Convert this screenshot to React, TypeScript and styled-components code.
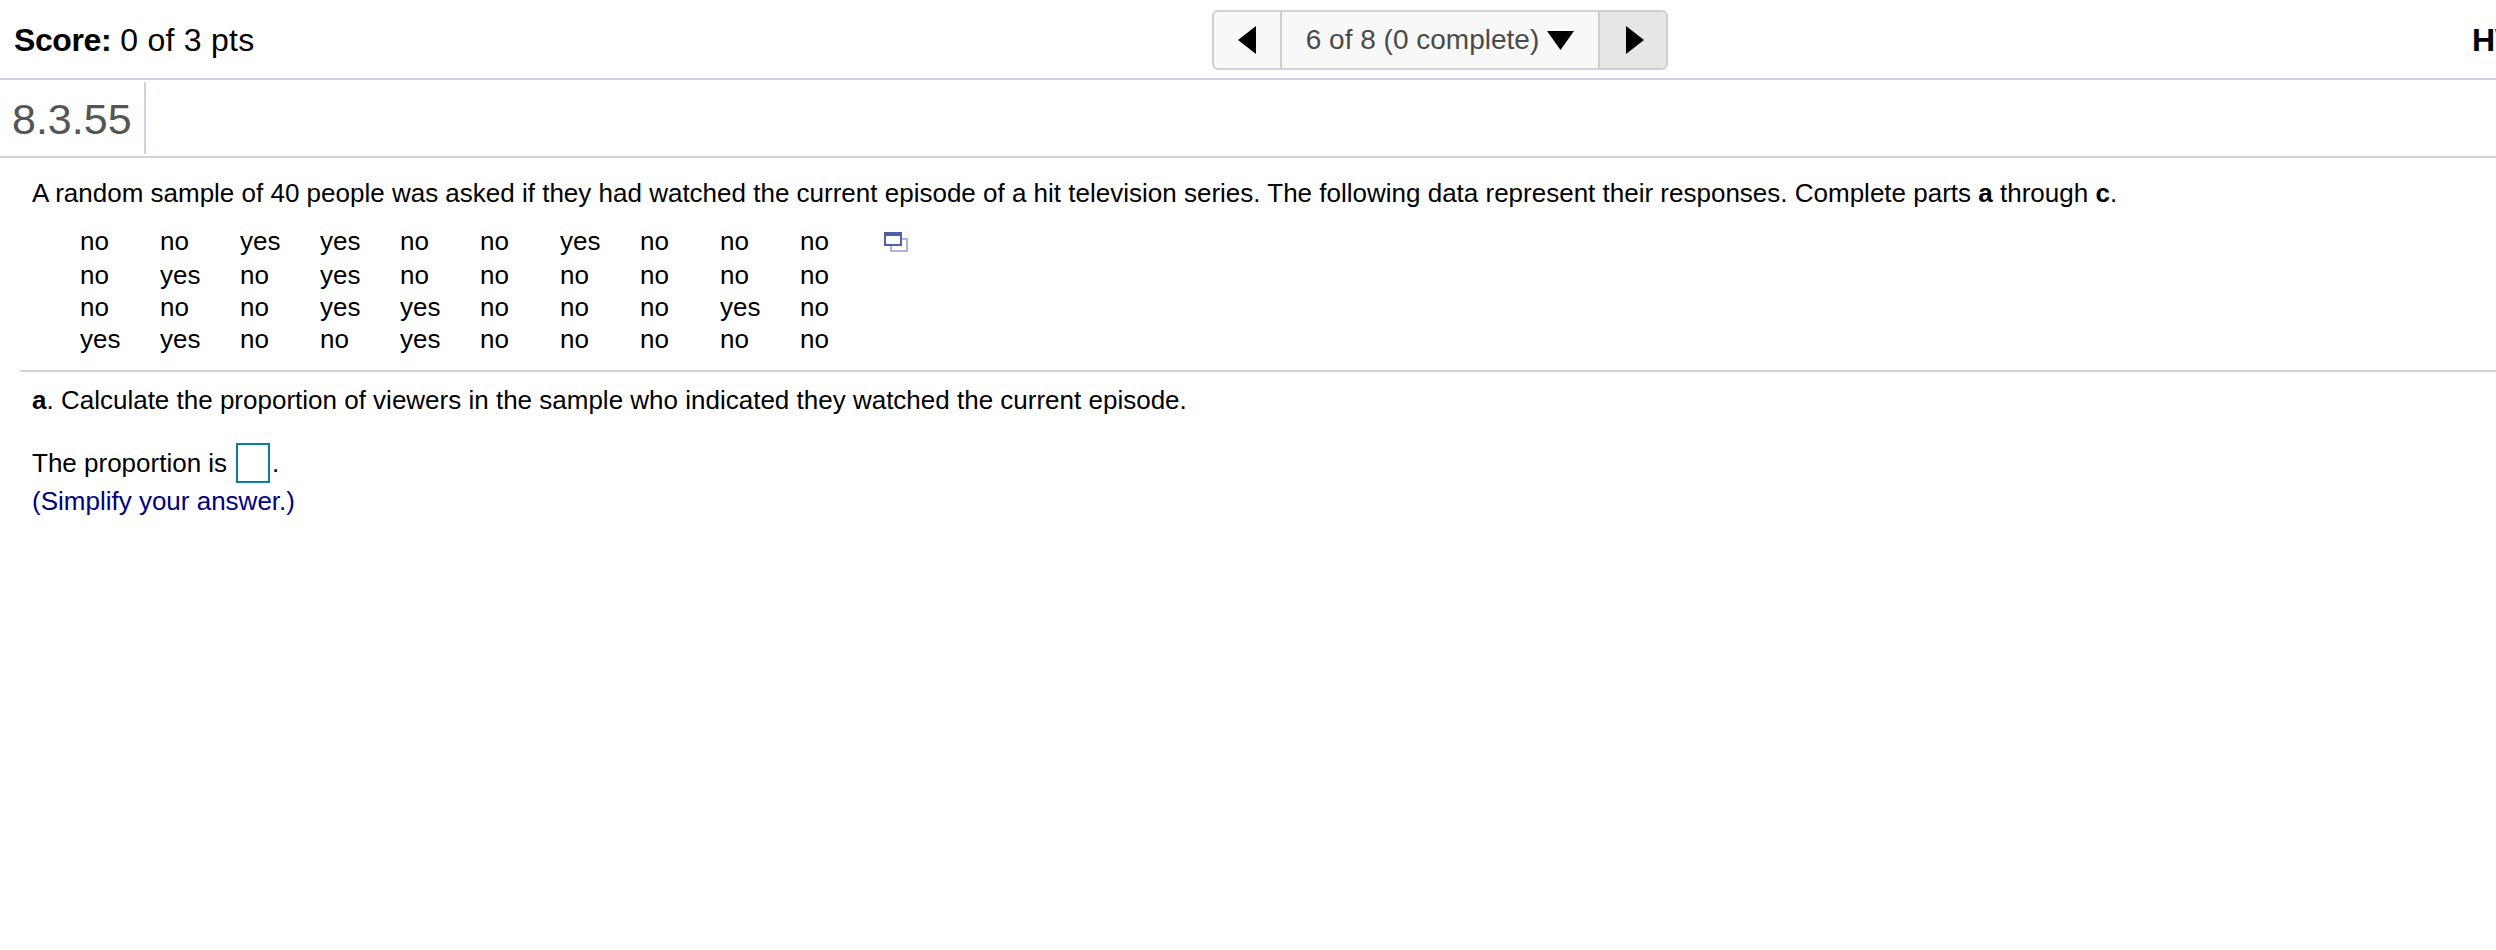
import React, { FunctionComponent } from "react"
import styled, { createGlobalStyle } from "styled-components"

const ruleColor = "#cdd1e0"

const GlobalStyle = createGlobalStyle`
  html, body {
    margin: 0;
    padding: 0;
    background: #fff;
    color: #000;
    font-family: "Liberation Sans", Arial, sans-serif;
    overflow: hidden;
  }
`

const Page = styled.div`
  width: 2496px;
  height: 950px;
  overflow: hidden;
`

const TopBar = styled.header`
  display: flex;
  align-items: flex-start;
  height: 78px;
  border-bottom: 2px solid ${ruleColor};
  overflow: hidden;
`

const Score = styled.div`
  flex: 0 0 1212px;
  padding: 22px 0 0 14px;
  box-sizing: border-box;
  font-size: 32px;
  letter-spacing: 0.25px;
  line-height: 36px;
`

const ScoreLabel = styled.b`
  letter-spacing: -0.4px;
`

const Pager = styled.nav`
  flex: 0 0 456px;
  display: flex;
  box-sizing: border-box;
  height: 60px;
  margin-top: 10px;
  border: 2px solid #d0d0d0;
  border-radius: 6px;
  background: #f8f8f8;
  overflow: hidden;
`

const PagerButton = styled.div<{ $active?: boolean }>`
  flex: 0 0 66px;
  display: flex;
  align-items: center;
  justify-content: center;
  padding-left: ${({ $active }) => ($active ? "3px" : "0")};
  box-sizing: border-box;
  background: ${({ $active }) => ($active ? "#e6e6e6" : "transparent")};
`

const PagerLabel = styled.div`
  flex: 1;
  display: flex;
  align-items: center;
  justify-content: center;
  gap: 8px;
  border-left: 2px solid #d0d0d0;
  border-right: 2px solid #d0d0d0;
  color: #4a4a4a;
  font-size: 28px;
`

const HomeworkScore = styled.div`
  margin-left: 804px;
  padding-top: 22px;
  font-size: 32px;
  font-weight: bold;
  line-height: 36px;
  white-space: nowrap;
`

const TitleRow = styled.div`
  display: flex;
  height: 76px;
  border-bottom: 2px solid ${ruleColor};
`

const QuestionNumber = styled.div`
  width: 132px;
  height: 72px;
  margin-top: 2px;
  padding-left: 12px;
  border-right: 2px solid ${ruleColor};
  color: #555;
  font-size: 43px;
  line-height: 74px;
`

const Body = styled.main`
  padding-left: 20px;
  font-size: 26px;
`

const Intro = styled.p`
  margin: 0;
  padding: 20px 0 0 12px;
  line-height: 30px;
  white-space: nowrap;
`

const DataBlock = styled.div`
  display: flex;
  margin: 15px 0 0 60px;
`

const DataTable = styled.table`
  border-collapse: collapse;
  table-layout: fixed;
  width: 800px;
`

const DataRow = styled.tr<{ $first?: boolean }>`
  height: ${({ $first }) => ($first ? "36px" : "32px")};
`

const DataCell = styled.td`
  width: 80px;
  padding: 0;
  line-height: 30px;
`

const PopoutIcon = styled.svg`
  flex: none;
  margin: 9px 0 0 4px;
`

const Rule = styled.hr`
  height: 2px;
  margin: 15px 0 0;
  border: 0;
  background: ${ruleColor};
`

const PartPrompt = styled.p`
  margin: 0;
  padding: 13px 0 0 12px;
  line-height: 30px;
  white-space: nowrap;
`

const AnswerLine = styled.div`
  display: flex;
  align-items: center;
  margin-top: 28px;
  padding-left: 12px;
  line-height: 30px;
`

const AnswerBox = styled.span`
  box-sizing: border-box;
  width: 34px;
  height: 40px;
  margin: 0 2px 0 9px;
  border: 2px solid #0e7c9c;
`

const Hint = styled.div`
  padding-left: 12px;
  color: #000080;
  line-height: 36px;
`

const rows: string[][] = [
  ["no", "no", "yes", "yes", "no", "no", "yes", "no", "no", "no"],
  ["no", "yes", "no", "yes", "no", "no", "no", "no", "no", "no"],
  ["no", "no", "no", "yes", "yes", "no", "no", "no", "yes", "no"],
  ["yes", "yes", "no", "no", "yes", "no", "no", "no", "no", "no"],
]

const Triangle: FunctionComponent<{ points: string; width: number; height: number }> = ({
  points,
  width,
  height,
}) => (
  <svg width={width} height={height} viewBox={`0 0 ${width} ${height}`}>
    <polygon points={points} fill="#000" />
  </svg>
)

const App: FunctionComponent = () => (
  <Page>
    <GlobalStyle />
    <TopBar>
      <Score>
        <ScoreLabel>Score:</ScoreLabel> 0 of 3 pts
      </Score>
      <Pager>
        <PagerButton>
          <Triangle width={18} height={28} points="18,0 18,28 0,14" />
        </PagerButton>
        <PagerLabel>
          6 of 8 (0 complete)
          <Triangle width={27} height={19} points="0,0 27,0 13.5,19" />
        </PagerLabel>
        <PagerButton $active>
          <Triangle width={18} height={28} points="0,0 18,14 0,28" />
        </PagerButton>
      </Pager>
      <HomeworkScore>HW Score: 0%</HomeworkScore>
    </TopBar>
    <TitleRow>
      <QuestionNumber>8.3.55</QuestionNumber>
    </TitleRow>
    <Body>
      <Intro>
        A random sample of 40 people was asked if they had watched the current episode of a hit
        television series. The following data represent their responses. Complete parts{" "}
        <b>a</b> through <b>c</b>.
      </Intro>
      <DataBlock>
        <DataTable>
          <tbody>
            {rows.map((row, rowIndex) => (
              <DataRow key={rowIndex} $first={rowIndex === 0}>
                {row.map((value, cellIndex) => (
                  <DataCell key={cellIndex}>{value}</DataCell>
                ))}
              </DataRow>
            ))}
          </tbody>
        </DataTable>
        <PopoutIcon width={24} height={20} viewBox="0 0 24 20">
          <rect x="7" y="7" width="16" height="12" fill="#fff" stroke="#aeb4d8" strokeWidth="2" />
          <rect x="1" y="1" width="16" height="12" fill="#fff" stroke="#4e5fa8" strokeWidth="2" />
          <rect x="0" y="0" width="18" height="4" fill="#4e5fa8" />
        </PopoutIcon>
      </DataBlock>
      <Rule />
      <PartPrompt>
        <b>a</b>. Calculate the proportion of viewers in the sample who indicated they watched the
        current episode.
      </PartPrompt>
      <AnswerLine>
        The proportion is
        <AnswerBox />.
      </AnswerLine>
      <Hint>(Simplify your answer.)</Hint>
    </Body>
  </Page>
)

export default App
